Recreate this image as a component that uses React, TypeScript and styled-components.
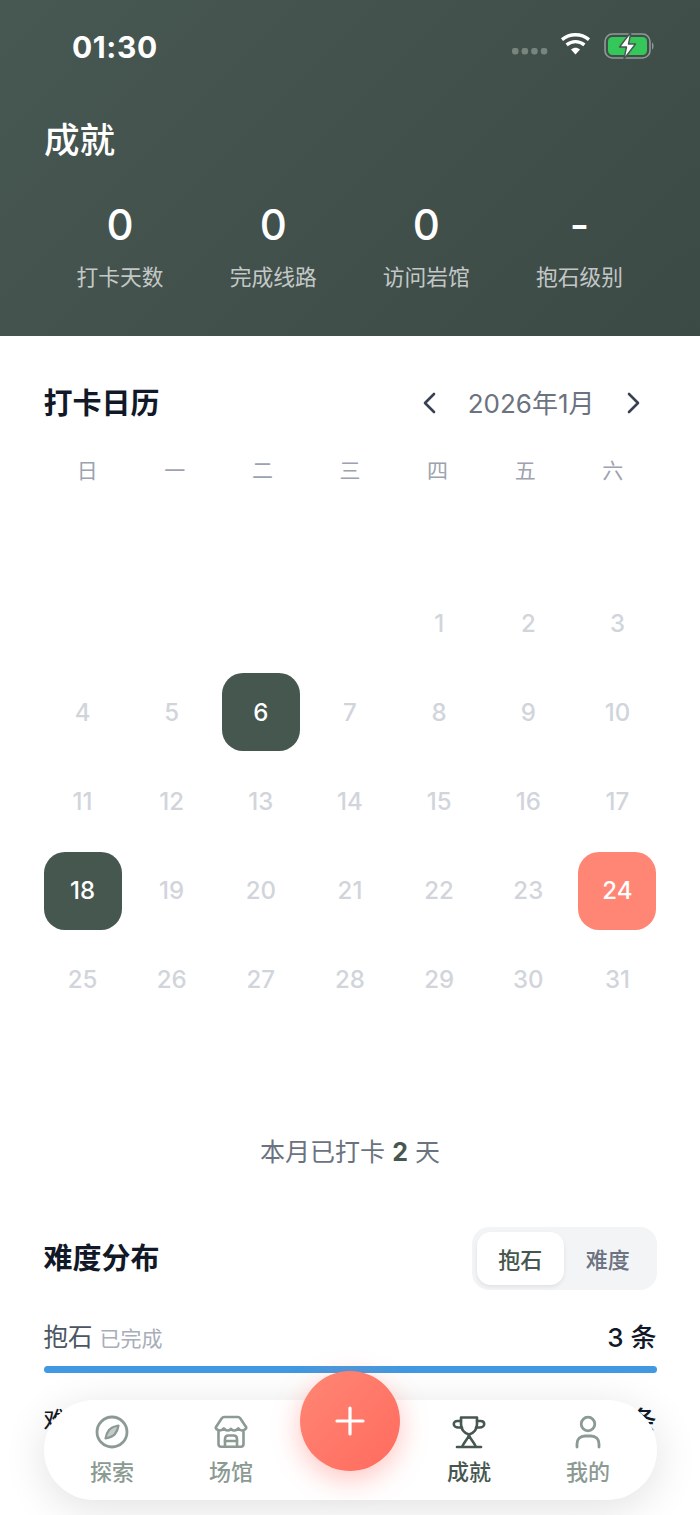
import React from 'react';
import styled, { createGlobalStyle } from 'styled-components';

const GlobalStyle = createGlobalStyle`
  html, body {
    margin: 0;
    padding: 0;
    background: #ffffff;
    font-family: Inter, "Noto Sans CJK SC", sans-serif;
  }
`;

const STATS = [
  { value: '0', label: '打卡天数' },
  { value: '0', label: '完成线路' },
  { value: '0', label: '访问岩馆' },
  { value: '-', label: '抱石级别' },
];

const WEEKDAYS = ['日', '一', '二', '三', '四', '五', '六'];
const LEADING_BLANKS = 11;
const TRAILING_BLANKS = 7;
const CHECKED = [6, 18];
const TODAY = 24;
const DAYS = Array.from({ length: 31 }, (_, i) => i + 1);

const StatusIcons = () => (
  <StatusRight>
    <svg width="142" height="32" viewBox="0 0 142 32" fill="none">
      <g fill="#78857f">
        <rect x="0" y="18" width="6.5" height="6.5" rx="2.4" />
        <rect x="9.6" y="18" width="6.5" height="6.5" rx="2.4" />
        <rect x="19.2" y="18" width="6.5" height="6.5" rx="2.4" />
        <rect x="28.8" y="18" width="6.5" height="6.5" rx="2.4" />
      </g>
      <g stroke="#fff" strokeWidth="3.4" fill="none">
        <path d="M50 9.6c8-6.4 19-6.4 27 0" />
        <path d="M54.6 14.8c5.4-4.2 12.4-4.2 17.8 0" />
      </g>
      <path d="M59 19.4c3-2.3 6-2.3 9 0l-4.500 5.200z" fill="#fff" />
      <rect x="93" y="4" width="45" height="24" rx="7.500" stroke="#8f9a95" strokeWidth="1.600" />
      <rect x="96" y="7" width="39" height="18" rx="4.500" fill="#35c759" />
      <path d="M140 12.500c2 .6 2 6.400 0 7z" fill="#8f9a95" />
      <path
        d="M119 2l-11.500 15h7l-2.500 12 11.500-15h-7z"
        fill="#fff"
        stroke="#46564f"
        strokeWidth="1.400"
        strokeLinejoin="round"
      />
    </svg>
  </StatusRight>
);

const CompassIcon = () => (
  <svg width="34" height="34" viewBox="0 0 34 34" fill="none">
    <circle cx="17" cy="17" r="15" stroke="currentColor" strokeWidth="2.800" />
    <path
      d="M23.500 10.500c-4.500 1-8 2.500-9.500 4.500-1.500 2-3 5-3.500 8.500 4.500-1 8-2.500 9.500-4.500 1.500-2 3-5 3.500-8.500z"
      stroke="currentColor"
      strokeWidth="2.200"
      strokeLinejoin="round"
      fill="currentColor"
      fillOpacity="0.5"
    />
  </svg>
);

const StoreIcon = () => (
  <svg width="34" height="34" viewBox="0 0 34 34" fill="none" stroke="currentColor" strokeWidth="2.600" strokeLinejoin="round" strokeLinecap="round">
    <path d="M10 2h14c1 0 1.600.4 2.200 1.200L32 12c.5.8.2 1.400-.4 2-2 2-5.200 2-7.400-.6-2.400 2.800-5 2.800-7.200.4-2.200 2.400-4.800 2.400-7.200-.4-2.200 2.600-5.400 2.600-7.400.6-.6-.6-.9-1.200-.4-2l5.800-8.800C8.400 2.400 9 2 10 2z" />
    <path d="M4.500 17v12c0 1.800 1 2.800 2.800 2.800h19.400c1.800 0 2.800-1 2.800-2.800V17" />
    <path d="M11 31.800V24c0-2.200 1.200-3.500 3.400-3.500h5.200c2.200 0 3.400 1.300 3.400 3.500v7.800" />
    <path d="M11 26h12" />
  </svg>
);

const TrophyIcon = () => (
  <svg width="34" height="34" viewBox="0 0 34 34" fill="none" stroke="currentColor" strokeWidth="2.600" strokeLinejoin="round" strokeLinecap="round">
    <path d="M9 2.500h16v6.500c0 5-3 9-8 10.500-5-1.500-8-5.500-8-10.500z" />
    <path d="M9 6H5.500C3 6 1.800 7.300 1.800 9c0 2.200 2 3.500 4.500 3.500H10" />
    <path d="M25 6h3.500C31 6 32.200 7.300 32.200 9c0 2.200-2 3.500-4.500 3.500H24" />
    <path d="M17 19.500c0 3-4.500 7-6.500 11.500M17 19.500c0 3 4.500 7 6.500 11.500" />
    <path d="M5 32h24" />
  </svg>
);

const UserIcon = () => (
  <svg width="34" height="34" viewBox="0 0 34 34" fill="none" stroke="currentColor" strokeWidth="2.800" strokeLinecap="round">
    <circle cx="17" cy="9" r="6.800" />
    <path d="M6 32v-3c0-5 3.500-8 8-8h6c4.500 0 8 3 8 8v3" />
  </svg>
);

export default function App() {
  return (
    <>
      <GlobalStyle />
      <Screen>
        <Hero>
          <StatusBar>
            <Time>01:30</Time>
            <StatusIcons />
          </StatusBar>
          <PageTitle>成就</PageTitle>
          <StatsRow>
            {STATS.map((s) => (
              <Stat key={s.label}>
                <StatValue>{s.value}</StatValue>
                <StatLabel>{s.label}</StatLabel>
              </Stat>
            ))}
          </StatsRow>
        </Hero>

        <CalendarSection>
          <SectionHeader>
            <SectionTitle>打卡日历</SectionTitle>
            <MonthNav>
              <svg width="16" height="24" viewBox="0 0 16 24" fill="none" stroke="#374151" strokeWidth="2.600" strokeLinecap="round" strokeLinejoin="round">
                <path d="M12 3 3 12l9 9" />
              </svg>
              <MonthLabel>2026年1月</MonthLabel>
              <svg width="16" height="24" viewBox="0 0 16 24" fill="none" stroke="#374151" strokeWidth="2.600" strokeLinecap="round" strokeLinejoin="round">
                <path d="m4 3 9 9-9 9" />
              </svg>
            </MonthNav>
          </SectionHeader>
          <WeekRow>
            {WEEKDAYS.map((d) => (
              <WeekDay key={d}>{d}</WeekDay>
            ))}
          </WeekRow>
          <DayGrid>
            {Array.from({ length: LEADING_BLANKS }, (_, i) => (
              <DayCell key={`blank-${i}`} $kind="blank" />
            ))}
            {DAYS.map((d) => (
              <DayCell key={d} $kind={d === TODAY ? 'today' : CHECKED.includes(d) ? 'checked' : 'plain'}>
                {d}
              </DayCell>
            ))}
            {Array.from({ length: TRAILING_BLANKS }, (_, i) => (
              <DayCell key={`end-${i}`} $kind="blank" />
            ))}
          </DayGrid>
          <Summary>
            本月已打卡 <SummaryCount>2</SummaryCount> 天
          </Summary>
        </CalendarSection>

        <DistributionSection>
          <SectionHeader>
            <SectionTitle>难度分布</SectionTitle>
            <Segmented>
              <Segment $active>抱石</Segment>
              <Segment>难度</Segment>
            </Segmented>
          </SectionHeader>
          <DistRow>
            <DistName>
              抱石 <DistNote>已完成</DistNote>
            </DistName>
            <DistCount>3 条</DistCount>
          </DistRow>
          <Bar />
          <NextRow>
            <DistStrong>难度</DistStrong>
            <DistCount>3 条</DistCount>
          </NextRow>
        </DistributionSection>

        <TabBar>
          <Tab>
            <CompassIcon />
            <TabLabel>探索</TabLabel>
          </Tab>
          <Tab>
            <StoreIcon />
            <TabLabel>场馆</TabLabel>
          </Tab>
          <TabSpacer />
          <Tab $active>
            <TrophyIcon />
            <TabLabel>成就</TabLabel>
          </Tab>
          <Tab>
            <UserIcon />
            <TabLabel>我的</TabLabel>
          </Tab>
        </TabBar>
        <Fab>
          <svg width="32" height="32" viewBox="0 0 32 32" fill="none" stroke="#fff" strokeWidth="3.200" strokeLinecap="round">
            <path d="M16 3v26M3 16h26" />
          </svg>
        </Fab>
      </Screen>
    </>
  );
}

const Screen = styled.div`
  position: relative;
  width: 700px;
  height: 1515px;
  overflow: hidden;
  background: #ffffff;
`;

const Hero = styled.header`
  height: 335.5px;
  box-sizing: border-box;
  padding: 0 44px;
  background: linear-gradient(135deg, #475751 0%, #3c4a46 100%);
  color: #ffffff;
`;

const StatusBar = styled.div`
  height: 92px;
  display: flex;
  align-items: center;
  justify-content: space-between;
  padding-left: 28px;
  margin-right: 2px;
`;

const Time = styled.div`
  margin-top: 2px;
  font-size: 30px;
  font-weight: 700;
  letter-spacing: 0.6px;
`;

const StatusRight = styled.div`
  display: flex;
  align-items: center;
`;

const PageTitle = styled.h1`
  margin: 0;
  height: 98px;
  line-height: 98px;
  font-size: 35.5px;
  font-weight: 500;
`;

const StatsRow = styled.div`
  display: grid;
  grid-template-columns: repeat(4, 1fr);
  margin-left: -0.5px;
  padding-top: 10px;
`;

const Stat = styled.div`
  display: flex;
  flex-direction: column;
  align-items: center;
`;

const StatValue = styled.div`
  font-size: 42px;
  line-height: 50px;
  font-weight: 500;
`;

const StatLabel = styled.div`
  margin-top: 10px;
  font-size: 21.75px;
  line-height: 34px;
  color: rgba(255, 255, 255, 0.7);
`;

const CalendarSection = styled.section`
  padding: 44px 43.5px 0 43.5px;
`;

const SectionHeader = styled.div`
  display: flex;
  align-items: center;
  justify-content: space-between;
`;

const SectionTitle = styled.h2`
  margin: 1px 0 0;
  font-size: 29px;
  line-height: 46px;
  font-weight: 600;
  color: #111827;
`;

const MonthNav = styled.div`
  display: flex;
  align-items: center;
  gap: 30px;
  padding-right: 16px;
`;

const MonthLabel = styled.span`
  margin-bottom: 3px;
  font-size: 26px;
  color: #6b7280;
`;

const WeekRow = styled.div`
  margin-top: 26px;
  display: grid;
  grid-template-columns: repeat(7, 1fr);
`;

const WeekDay = styled.div`
  text-align: center;
  font-size: 21px;
  line-height: 36px;
  color: #9ca3af;
`;

const DayGrid = styled.div`
  margin-top: 6.5px;
  display: grid;
  grid-template-columns: repeat(7, 78px);
  grid-auto-rows: 78px;
  justify-content: space-between;
  row-gap: 11.2px;
`;

type DayKind = 'blank' | 'plain' | 'checked' | 'today';

const DAY_BACKGROUND: Record<DayKind, string> = {
  blank: 'transparent',
  plain: 'transparent',
  checked: '#46574f',
  today: '#ff8674',
};

const DayCell = styled.div<{ $kind: DayKind }>`
  display: flex;
  align-items: center;
  justify-content: center;
  border-radius: 21px;
  font-size: 24px;
  font-weight: 500;
  background: ${({ $kind }) => DAY_BACKGROUND[$kind]};
  color: ${({ $kind }) => ($kind === 'checked' || $kind === 'today' ? '#ffffff' : '#d1d5db')};
`;

const Summary = styled.div`
  margin-top: 32px;
  text-align: center;
  font-size: 25px;
  line-height: 24px;
  color: #6b7280;
`;

const SummaryCount = styled.strong`
  font-weight: 700;
  color: #46574f;
`;

const DistributionSection = styled.section`
  padding: 63px 43.5px 0 43.5px;
`;

const Segmented = styled.div`
  display: flex;
  gap: 0;
  padding: 5px;
  border-radius: 17px;
  background: #f3f4f6;
`;

const Segment = styled.div<{ $active?: boolean }>`
  width: 87.5px;
  height: 52.5px;
  display: flex;
  align-items: center;
  justify-content: center;
  border-radius: 14px;
  font-size: 22px;
  font-weight: 500;
  color: ${({ $active }) => ($active ? '#46574f' : '#6b7280')};
  background: ${({ $active }) => ($active ? '#ffffff' : 'transparent')};
  box-shadow: ${({ $active }) => ($active ? '0 2px 4px rgba(0, 0, 0, 0.08)' : 'none')};
`;

const DistRow = styled.div`
  display: flex;
  align-items: center;
  justify-content: space-between;
  margin-top: 28px;
  height: 36px;
`;

const NextRow = styled(DistRow)`
  margin-top: 28px;
`;

const DistName = styled.div`
  font-size: 24.5px;
  color: #4b5563;
`;

const DistNote = styled.span`
  font-size: 21px;
  color: #a8aeb9;
`;

const DistStrong = styled.div`
  font-size: 24px;
  color: #111827;
`;

const DistCount = styled.div`
  font-size: 26px;
  font-weight: 500;
  color: #111827;
`;

const Bar = styled.div`
  margin-top: 12px;
  height: 7px;
  border-radius: 4px;
  background: #4299e1;
`;

const TabBar = styled.nav`
  position: absolute;
  left: 43.5px;
  top: 1400px;
  width: 613px;
  height: 100px;
  box-sizing: border-box;
  padding: 0 9px;
  display: flex;
  border-radius: 50px;
  background: #ffffff;
  box-shadow: 0 8px 44px rgba(0, 0, 0, 0.12);
`;

const Tab = styled.div<{ $active?: boolean }>`
  flex: 1;
  display: flex;
  flex-direction: column;
  align-items: center;
  padding-top: 15px;
  color: ${({ $active }) => ($active ? '#46574f' : '#8b9a92')};
`;

const TabSpacer = styled.div`
  flex: 1;
`;

const TabLabel = styled.span`
  margin-top: 8px;
  font-size: 22px;
  line-height: 30px;
  font-weight: 500;
`;

const Fab = styled.div`
  position: absolute;
  left: 300px;
  top: 1371px;
  width: 100px;
  height: 100px;
  display: flex;
  align-items: center;
  justify-content: center;
  border-radius: 50%;
  background: linear-gradient(135deg, #ff8674 0%, #ff6b5e 100%);
  box-shadow: 0 8px 28px rgba(255, 107, 94, 0.4);
`;
